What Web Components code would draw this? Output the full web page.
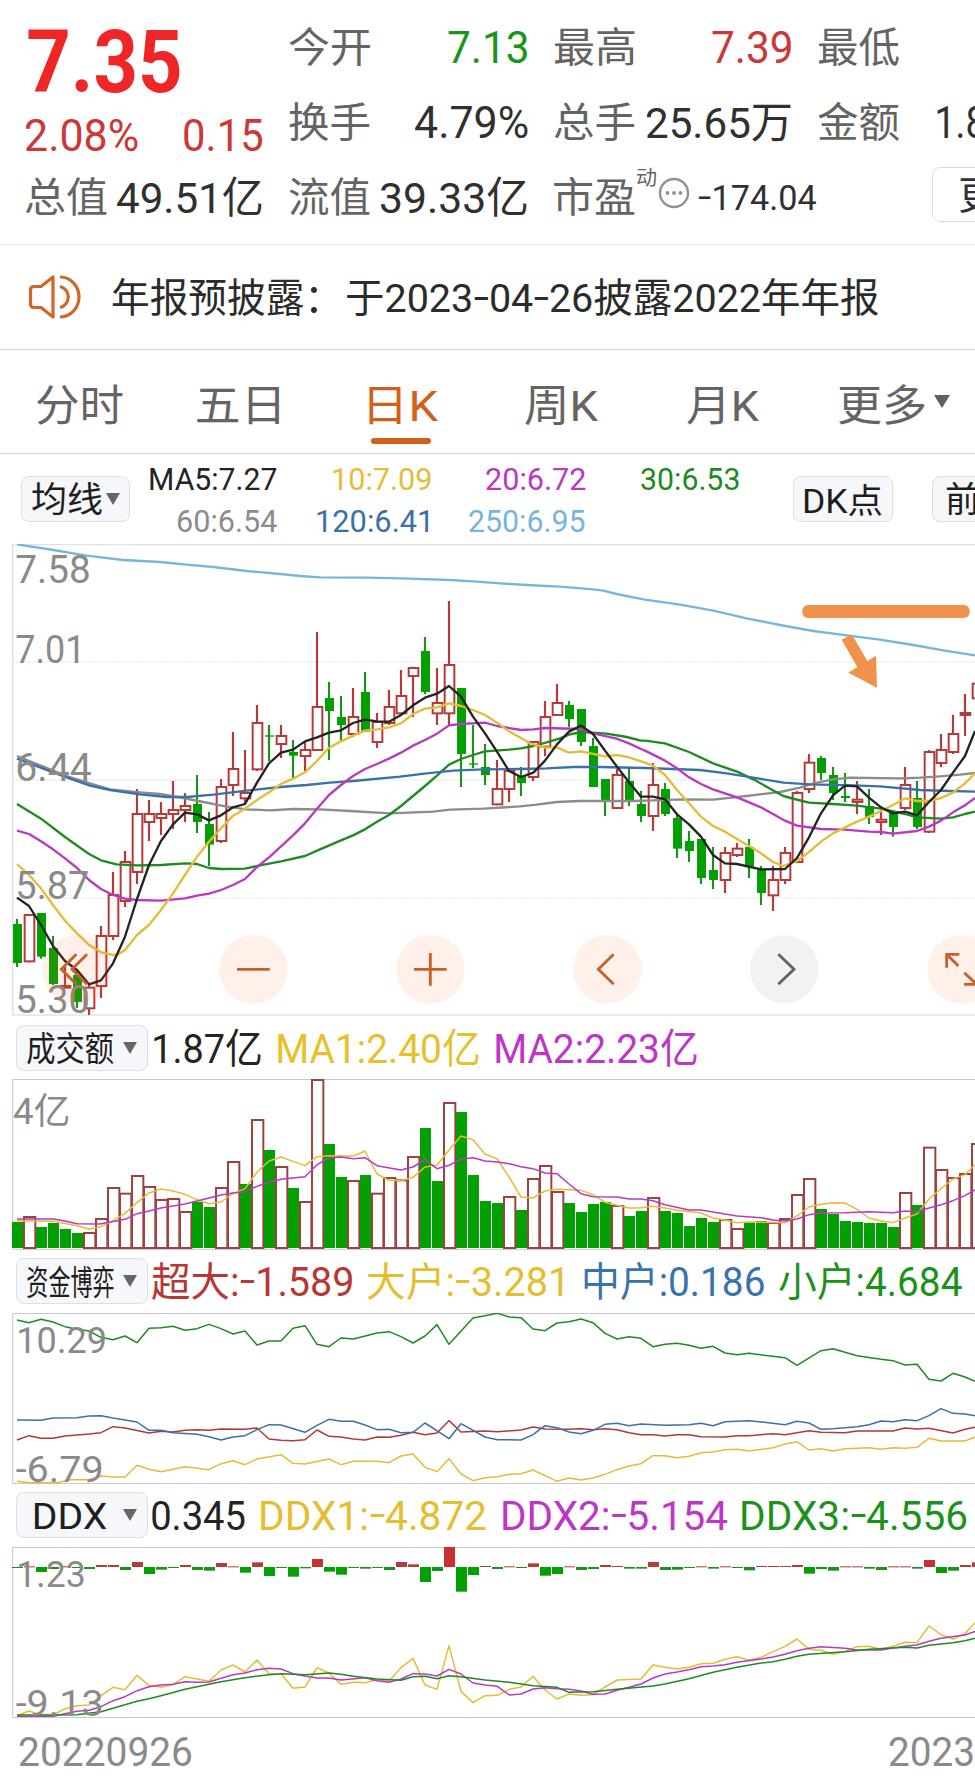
<!DOCTYPE html>
<html lang="zh-CN">
<head>
<meta charset="utf-8">
<title>日K</title>
<style>
  html, body { margin: 0; background: #fff; overflow: hidden; }
  body { width: 975px; height: 1778px; font-family: Roboto, "Noto Sans CJK SC", sans-serif; color: #2b2b2b; }
</style>
</head>
<body>
<stock-page></stock-page>

<script>
const RED = '#b53a38';
const GREEN = '#02a002';
const COLORS = {
  black: '#242424', yellow: '#e3bc38', magenta: '#b93ac0', green: '#1f8a22',
  gray: '#8c8c8c', blue: '#3c70a8', sky: '#78b5dd', red: '#b03a38'
};
const FONT = 'Roboto, "Noto Sans CJK SC", sans-serif';
const measure = document.createElement('canvas').getContext('2d');

// Text squeezed or stretched to an exact visible width
class FitText extends HTMLElement {
  constructor() {
    super();
    this.attachShadow({ mode: 'open' });
  }

  connectedCallback() {
    const w = Number(this.getAttribute('w'));
    const size = Number(this.getAttribute('size') || 40);
    const gap = this.getAttribute('gap') || 0;
    const weight = this.getAttribute('weight') || 400;
    const color = this.getAttribute('color');
    const text = this.textContent;
    // a minus sign is drawn wider than the font's hyphen
    const dashes = text.split('-').length - 1;
    measure.font = `${weight} ${size}px ${FONT}`;
    const m = measure.measureText(text);
    const k = w / (m.actualBoundingBoxLeft + m.actualBoundingBoxRight + dashes * size * 0.12);
    this.shadowRoot.innerHTML = `
      <style>
      :host {
        display: block;
        flex: none;
        width: ${w}px;
        margin-left: ${gap}px;
        font: ${weight} ${size}px/1.2 ${FONT};
        white-space: nowrap;
        ${color ? `color: ${COLORS[color] || color};` : ''}
      }
      span {
        display: inline-block;
        transform-origin: 0 50%;
        transform: translate(${m.actualBoundingBoxLeft * k}px, 1.5px) scaleX(${k});
        vertical-align: top;
      }
      b { display: inline-block; font-weight: inherit; margin: 0 .06em; transform: translateY(-.03em) scaleX(1.4); }
      </style><span>${text.replace(/-/g, '<b>-</b>')}</span>`;
  }
}
customElements.define('fit-text', FitText);

class QuoteHeader extends HTMLElement {
  constructor() {
    super();
    this.attachShadow({ mode: 'open' });
  }

  connectedCallback() {
    this.shadowRoot.innerHTML = `
      <style>
      :host { display: flex; height: 244px; border-bottom: 1px solid #e9e9e9; color: #303030; overflow: hidden; }
      .left { width: 262px; flex: none; padding-top: 10px; }
      .right { flex: 1; padding-top: 9px; }
      .row { display: flex; align-items: center; height: 75px; }
      .price { height: 100px; }
      .change { height: 48px; }
      .cap { height: 77px; }
      .label { color: #646464; }
      .sup { align-self: flex-start; margin-top: 5px; color: #646464; }
      .dots { flex: none; margin-left: 2px; margin-top: -7px; }
      .more {
        flex: none; box-sizing: border-box; width: 110px; height: 55px; margin: -5px 0 0 116px;
        display: flex; align-items: center; border: 1.5px solid #dedede; border-radius: 8px;
      }
      </style>
      <div class="left">
        <div class="row price"><fit-text gap="28" w="152" size="87" weight="700" color="#ee2626">7.35</fit-text></div>
        <div class="row change">
          <fit-text gap="26" w="112" size="44" color="#cb3838">2.08%</fit-text>
          <fit-text gap="46" w="78" size="44" color="#cb3838">0.15</fit-text>
        </div>
        <div class="row cap">
          <fit-text class="label" gap="25" w="82" size="41">总值</fit-text>
          <fit-text gap="10" w="145" size="43">49.51亿</fit-text>
        </div>
      </div>
      <div class="right">
        <div class="row">
          <fit-text class="label" gap="27" w="81" size="41">今开</fit-text>
          <fit-text gap="78" w="79" size="44" color="#199619">7.13</fit-text>
          <fit-text class="label" gap="27" w="81" size="41">最高</fit-text>
          <fit-text gap="77" w="79" size="44" color="#cb3838">7.39</fit-text>
          <fit-text class="label" gap="27" w="81" size="41">最低</fit-text>
        </div>
        <div class="row">
          <fit-text class="label" gap="27" w="81" size="41">换手</fit-text>
          <fit-text gap="45" w="113" size="44">4.79%</fit-text>
          <fit-text class="label" gap="26" w="81" size="41">总手</fit-text>
          <fit-text gap="11" w="145" size="43">25.65万</fit-text>
          <fit-text class="label" gap="27" w="81" size="41">金额</fit-text>
          <fit-text gap="38" w="48" size="44">1.8</fit-text>
        </div>
        <div class="row">
          <fit-text class="label" gap="27" w="81" size="41">流值</fit-text>
          <fit-text gap="11" w="146" size="43">39.33亿</fit-text>
          <fit-text class="label" gap="27" w="81" size="41">市盈</fit-text>
          <fit-text class="sup" gap="2" w="19" size="20">动</fit-text>
          <svg class="dots" width="32" height="32" viewBox="0 0 32 32">
            <circle cx="16" cy="16" r="14" fill="none" stroke="#929292" stroke-width="2.4"/>
            <circle cx="9.500" cy="16" r="1.900" fill="#929292"/><circle cx="16" cy="16" r="1.900" fill="#929292"/><circle cx="22.500" cy="16" r="1.900" fill="#929292"/>
          </svg>
          <fit-text gap="8" w="118" size="35">-174.04</fit-text>
          <div class="more"><fit-text gap="26" w="40" size="39">更</fit-text></div>
        </div>
      </div>`;
  }
}
customElements.define('quote-header', QuoteHeader);

class NoticeBar extends HTMLElement {
  constructor() {
    super();
    this.attachShadow({ mode: 'open' });
  }

  connectedCallback() {
    this.shadowRoot.innerHTML = `
      <style>
      :host { display: flex; align-items: center; height: 104px; border-bottom: 1px solid #d2d2d2; }
      svg { flex: none; margin-left: 28px; }
      </style>
      <svg width="54" height="46" viewBox="0 0 54 46" fill="none" stroke="#d2662a" stroke-width="3.2">
        <path d="M25 3V43L13 33.500H6Q2.500 33.500 2.500 30V16Q2.500 12.500 6 12.500H13Z" stroke-linejoin="round"/>
        <path d="M32 12.500A10.800 10.800 0 0 1 32 33.500M32 3A19 20 0 0 1 32 43"/>
      </svg>
      <fit-text gap="30" w="205" size="39.500">${this.getAttribute('subject')}</fit-text>
      <fit-text gap="30" w="532" size="39.500">${this.getAttribute('text')}</fit-text>`;
  }
}
customElements.define('notice-bar', NoticeBar);

class PeriodTabs extends HTMLElement {
  constructor() {
    super();
    this.attachShadow({ mode: 'open' });
  }

  connectedCallback() {
    this.shadowRoot.innerHTML = `
      <style>
      :host { display: flex; height: 103px; border-bottom: 1px solid #d2d2d2; color: #646464; }
      .tab { padding-top: 29px; }
      .tab fit-text { line-height: 50px; }
      .active { color: #d2601a; }
      .active::after { content: ""; display: block; width: 60px; height: 6px; margin: 9px 0 0 2px; border-radius: 3px; background: #d2601a; }
      .arrow { margin: 45px 0 0 9px; width: 0; height: 0; border: 8px solid transparent; border-top: 13px solid #5f5f5f; border-bottom: 0; }
      </style>
      <div class="tab"><fit-text gap="36" w="87" size="43">分时</fit-text></div>
      <div class="tab"><fit-text gap="74" w="82" size="43">五日</fit-text></div>
      <div class="tab" style="width:90px"></div>
      <div class="tab active"><fit-text w="69" size="43">日K</fit-text></div>
      <div class="tab"><fit-text gap="87" w="73" size="43">周K</fit-text></div>
      <div class="tab"><fit-text gap="89" w="72" size="43">月K</fit-text></div>
      <div class="tab"><fit-text gap="80" w="86" size="43">更多</fit-text></div>
      <div class="arrow"></div>`;
  }
}
customElements.define('period-tabs', PeriodTabs);

class PillButton extends HTMLElement {
  constructor() {
    super();
    this.attachShadow({ mode: 'open' });
  }

  connectedCallback() {
    const arrow = this.hasAttribute('arrow');
    this.shadowRoot.innerHTML = `
      <style>
      :host {
        display: flex; align-items: center; flex: none; box-sizing: border-box; height: 46px;
        width: ${this.getAttribute('w')}px; border: 1px solid #dddfe4; border-radius: 8px;
        background: #f6f7fa; color: #1e1e1e;
      }
      i { margin-left: ${this.getAttribute('arrow')}px; border: 7.5px solid transparent; border-top: 12px solid #666; border-bottom: 0; }
      </style>
      <slot></slot>${arrow ? '<i></i>' : ''}`;
  }
}
customElements.define('pill-button', PillButton);

class MaLegend extends HTMLElement {
  constructor() {
    super();
    this.attachShadow({ mode: 'open' });
  }

  connectedCallback() {
    this.shadowRoot.innerHTML = `
      <style>
      :host { display: flex; align-items: center; height: 90px; overflow: hidden; }
      .values { width: 664px; flex: none; }
      .row { display: flex; align-items: center; height: 42px; }
      </style>
      <pill-button w="109" arrow="4" style="margin-left:21px"><fit-text gap="10" w="70" size="35">均线</fit-text></pill-button>
      <div class="values">
        <div class="row">
          <fit-text gap="20" w="127" size="31" color="black">MA5:7.27</fit-text>
          <fit-text gap="56" w="98" size="31" color="yellow">10:7.09</fit-text>
          <fit-text gap="55" w="100" size="31" color="magenta">20:6.72</fit-text>
          <fit-text gap="55" w="98" size="31" color="green">30:6.53</fit-text>
        </div>
        <div class="row">
          <fit-text gap="48" w="99" size="31" color="gray">60:6.54</fit-text>
          <fit-text gap="40" w="112" size="31" color="blue">120:6.41</fit-text>
          <fit-text gap="40" w="116" size="31" color="sky">250:6.95</fit-text>
        </div>
      </div>
      <pill-button w="100" style="margin-left:-1px"><fit-text gap="10" w="78" size="34">DK点</fit-text></pill-button>
      <pill-button w="100" style="margin-left:39px"><fit-text gap="13" w="33" size="35">前</fit-text></pill-button>`;
  }
}
customElements.define('ma-legend', MaLegend);

// Charts are drawn in thirds of a pixel; one bar takes 36 units and the first is centred on 51.
const STEP = 36;
const FIRST = 51;

function line(color, width, ...parts) {
  const pts = parts.map(([dx, s]) => s.trim().split(/\s+/).map(p => {
    const [x, y] = p.split(',').map(Number);
    return `${x + dx},${y}`;
  }).join(' ')).join(' ');
  return `<polyline points="${pts}" fill="none" stroke="${COLORS[color]}" stroke-width="${width}" stroke-linejoin="round"/>`;
}

function label(text, x, y, w, size = 118) {
  return `<text x="${x - 5}" y="${y}" font-size="${size}" textLength="${w + 10}" lengthAdjust="spacingAndGlyphs" fill="#8a8a8a">${text}</text>`;
}

function frame(top, bottom, color, width = 3) {
  return `<path d="M2940 ${top}H38V${bottom}H2940" fill="none" stroke="${color}" stroke-width="${width}"/>`;
}

// kind, high, body top, body bottom, low
const CANDLES = `g1137,1152,1269,1281 r1122,1125,1264,1267 g1119,1119,1250,1256 g1188,1224,1332,1335 r1280,1338,1343,1345
g1290,1305,1386,1404 r1335,1343,1405,1425 r1158,1188,1338,1374 r996,1065,1188,1200 r933,966,1083,1101
r747,822,996,1032 r780,822,846,903 r786,822,834,885 r723,810,822,867 r759,798,810,846
g705,792,846,879 g816,852,914,978 r717,741,903,909 r576,687,735,768 r630,759,775,790
r495,549,688,693 g555,586,590,663 r555,588,612,654 g600,636,647,714 r603,630,648,693
r276,501,630,633 g426,474,513,660 g468,531,555,603 r444,531,582,591 g396,456,575,576
r519,546,606,624 r450,501,549,555 r390,468,520,525 r380,384,408,531 g291,333,456,462
r384,489,520,555 r183,375,520,555 g444,444,642,741 g555,670,674,684 g612,681,705,735
r660,747,793,796 r687,693,747,786 g681,708,729,768 r603,606,711,723 r483,531,620,648
r432,489,525,528 g483,495,537,561 g507,507,606,618 g594,618,741,741 g717,717,780,828
r687,705,804,807 g684,723,783,798 g753,792,828,846 r669,735,828,873 g729,747,822,828
g820,834,926,954 g873,903,933,966 g897,897,1014,1032 g921,990,1020,1047 r921,939,1020,1059
r909,926,945,951 g897,921,980,1014 g978,990,1059,1095 r978,1020,1066,1113 r921,939,1020,1032
r753,759,966,969 r642,668,747,759 g648,654,699,720 g681,705,759,780 g699,768,774,786
r723,779,786,822 g747,798,831,852 r810,839,846,885 g810,816,861,890 r681,735,804,810
g723,774,861,867 r630,636,875,879 r582,630,669,681 r525,582,636,642 r462,519,525,588 r426,431,475,480`.split(/\s+/);

class KChart extends HTMLElement {
  constructor() {
    super();
    this.attachShadow({ mode: 'open' });
  }

  candles() {
    return CANDLES.map((c, i) => {
      const x = FIRST + STEP * i;
      const [high, top, bottom, low] = c.slice(1).split(',').map(Number);
      if (c[0] === 'g') {
        return `<path d="M${x} ${high}V${low}" stroke="#1f8f1f" stroke-width="6.500"/>
          <rect x="${x - 12}" y="${top}" width="27" height="${bottom - top}" fill="${GREEN}"/>`;
      }
      return `<path d="M${x} ${high}V${top}M${x} ${bottom}V${low}" stroke="${RED}" stroke-width="6.500"/>
        <rect x="${x - 13}" y="${top}" width="29" height="${bottom - top}" fill="none" stroke="${RED}" stroke-width="6"/>`;
    }).join('');
  }

  averages() {
    return line('sky', 7, [0, `51,13 160,30 260,47 370,60 480,66 560,74 640,81 740,93 840,102 900,108 960,112 1100,113 1230,116
        1350,120 1420,124 1500,130 1580,135 1680,140 1780,148 1810,152 1850,162 1900,172 1935,179 2040,194 2140,212 2240,235
        2340,255 2440,273 2540,286 2640,299 2740,315 2830,331 2925,346`]) +
      line('gray', 7, [0, `51,648 130,680 200,708 280,733 330,748 420,757 480,762 550,774 610,786 680,800 740,808 810,811 880,807
        960,808 1050,813 1170,820 1300,815 1350,809 1450,806 1560,799 1610,794 1670,786 1740,783 1900,783 1960,781 2050,778
        2140,779 2240,768 2340,756 2400,743 2440,730 2500,718 2550,713 2700,715 2760,713 2820,709 2880,704 2925,699`]) +
      line('green', 7, [0, `51,792 123,836 195,891 267,942 303,961 350,973 411,976 483,975 555,970 591,972 627,984 663,987 735,986
        780,976 843,964 915,948`],
        [960, `0,928 63,901 99,886 135,868 171,845 207,825 243,798 279,768 315,738 351,707 387,674 423,657 459,645 495,634 567,629
        603,625 640,618 680,607 720,595 747,584 783,576 860,581 920,591 963,602`],
        [1935, `0,602 60,610 132,636 204,670 276,695 325,718 370,743 415,768 460,780 492,788 564,792 636,797 708,806 780,822
        816,832 888,836 924,832 960,822 990,815`]) +
      line('blue', 7, [0, `51,656 130,686 200,712 270,737 330,750 420,763 500,771 560,771 640,764 740,752 840,741 920,735 990,728
        1060,723 1200,710 1280,700 1360,692 1450,688 1560,687 1640,685 1720,681 1800,681 1935,684 2100,690 2180,700 2260,713
        2350,728 2430,733 2560,736 2640,739 2760,750 2850,753 2925,755`]) +
      line('magenta', 7, [0, `51,872 87,882 123,904 159,928 195,955 231,984 267,1020 303,1047 339,1065 375,1076 411,1080 483,1082
        555,1075 591,1067 627,1061 663,1050 699,1035 735,1017 771,981 807,952 843,919 879,886 915,850 951,806`],
        [960, `27,765 63,735 99,708 135,687 171,672 207,656 243,638 279,617 315,600 351,581 387,556 423,552 495,548 531,558
        603,570 640,568 675,564 783,567 819,580 890,596 927,610 963,627`],
        [1935, `0,632 60,662 96,685 132,712 168,732 204,748 276,772 312,787 348,802 384,822 420,842 456,857 528,867 600,869
        672,875 708,876 744,881 816,873 852,860 888,842 924,817 960,796 990,774`]) +
      line('yellow', 7, [0, `51,972 87,1005 123,1045 159,1095 195,1142 231,1180 267,1215 303,1237 339,1245 355,1243 375,1230
        411,1185 447,1155 483,1110 519,1060 555,1005 591,950 627,905 663,865 699,827 735,806 771,780 807,757 843,732 879,716
        915,697 951,663`],
        [960, `27,623 63,604 99,587 135,572 171,568 207,562 243,550 279,522 315,506 351,502 387,490 423,498 459,510 495,525
        531,548 567,574 603,594 630,610 675,623 711,622 747,638 783,634 855,649 891,645 927,652 963,664`],
        [1935, `0,668 24,677 60,705 96,750 132,790 168,830 204,858 240,875 276,897 312,918 348,940 384,966 415,978 456,963
        492,936 528,905 564,880 600,862 636,845 672,830 708,813 744,795 780,775 816,783 852,783 888,774 924,758 960,730 990,700`]) +
      line('black', 7, [0, `51,1073 87,1098 123,1155 159,1218 195,1263 231,1290 267,1333 303,1321 339,1270 375,1190 411,1077
        447,975 483,903 519,853 555,818 591,823 627,841 663,826 699,802 735,792 771,728 807,670 843,638 879,629 915,604 951,592`],
        [960, `27,578 63,571 99,549 135,539 171,544 207,545 243,525 279,496 315,473 351,461 387,438 423,470 459,530 495,580
        531,635 567,693 603,711 640,698 675,662 711,613 747,575 783,557 819,582 855,632 891,680 927,727 963,770`],
        [1935, `24,770 60,778 96,823 132,853 168,890 204,945 240,970 276,972 348,988 420,987 456,954 492,892 528,820 564,766
        600,737 636,739 672,773 708,802 744,820 780,815 816,826 852,786 888,750 924,698 960,648 990,573`]);
  }

  buttons() {
    const icons = [
      '<path d="M0-45L-45 0L0 45M32-45L-13 0L32 45"/>',
      '<path d="M-49 0H49"/>',
      '<path d="M-49 0H49M0-49V49"/>',
      '<path d="M19-45L-27 0L19 45"/>',
      '<path d="M-18-45L29 0L-18 45" stroke="#636363"/>',
      '<path d="M-7-45H-45V-5M-43-43L-10-10M8 10L43 43M7 45H45V5"/>'
    ];
    return icons.map((icon, i) => `
      <g transform="translate(${229 + 531 * i + (i === 5 ? 1 : 0)} 1288)" fill="none" stroke="#c9602a" stroke-width="8.500">
        <circle r="103" stroke="none" fill="${i === 4 ? 'rgba(0,0,0,.05)' : 'rgba(255,110,40,.1)'}"/>${icon}
      </g>`).join('');
  }

  connectedCallback() {
    this.shadowRoot.innerHTML = `
      <style>
      :host { display: block; height: 476px; }
      svg { display: block; font-family: ${FONT}; }
      </style>
      <svg width="975" height="476" viewBox="0 12 2925 1428">
        ${[366, 720, 1074].map(y => `<path d="M38 ${y}H2925" stroke="#ebebeb" stroke-width="5" stroke-dasharray="6 3"/>`).join('')}
        ${frame(13, 1425, '#e2e2e2', 5)}
        ${this.candles()}
        ${this.averages()}
        ${label('7.58', 51, 129, 216)}
        ${label('7.01', 51, 369, 200)}
        ${label('6.44', 51, 723, 219)}
        ${label('5.87', 51, 1077, 212)}
        ${label('5.30', 51, 1419, 214)}
        ${this.buttons()}
        <rect x="2407" y="195" width="502" height="39" rx="17" fill="#f1924c"/>
        <path d="M2525 299L2550 286Q2556 284 2560 291L2602 363L2628 347L2631 443L2545 398L2572 381Z" fill="#f1924c"/>
      </svg>`;
  }
}
customElements.define('k-chart', KChart);

const VOLUME = `g606 r591 g621 g609 g627 g639 r639 r597 r504 r521 r468 r501 r540 r537 r576 g546 g561 r504 r426 g492 r300
g390 r441 g504 r546 r180 g372 g471 r483 g465 r521 r474 r481 r411 g324 g483 r249 g276 g465 g543 g549 r531 g570 r477 r438
r516 g549 g576 g552 g546 r558 g588 g573 r534 g573 g579 g618 g594 g606 r600 r627 g609 g603 r609 r597 r525 r477 g567 g582
g603 g606 g609 g609 g621 r519 g555 r383 r450 r474 r462 r372`.split(/\s+/);

// bar heights above (+) or below (-) the zero line
const DDX = [-2, 2, -15, -6, 2, -3, -6, 6, 6, -9, 15, -21, -8, -2, 6, -9, -11, 12, 2, -17, 14, -27, -3, -29, -4, 24, -14,
  -23, -3, -5, -3, -9, 15, 8, -45, -12, 60, -74, -24, 3, -6, 2, -3, 11, -26, -21, 2, -9, -6, 6, 3, -5, -5, 15, -9, -8, -3,
  2, -5, 2, -3, -10, 3, 3, 3, 6, -20, -6, -11, 2, 2, -5, -9, 2, 2, -5, 21, -18, -11, 6, 14];

const PLOTS = {
  volume: () => frame(178.500, 688, '#c8c8c8') +
    VOLUME.map((v, i) => {
      const x = 36 + STEP * i;
      const y = Number(v.slice(1));
      return v[0] === 'g'
        ? `<rect x="${x}" y="${y}" width="33" height="${684 - y}" fill="${GREEN}"/>`
        : `<rect x="${x}" y="${y}" width="34" height="${684 - y}" fill="#fff" stroke="#9c433f" stroke-width="6"/>`;
    }).join('') +
    line('yellow', 4.5, [0, `51,602 160,604 231,617 267,627 303,620 339,602 375,580 411,548 447,519 483,507 519,513 555,523
      591,539 627,551 663,546 699,520 735,506 771,456 807,423 843,411 879,424 915,437 951,410 987,407 1060,408 1095,393
      1131,462 1167,481 1203,482 1239,472 1275,441 1311,436 1347,390 1383,348 1419,359 1455,402`],
      [1455, `37,417 73,473 108,531 144,534 180,513 216,508 288,511 324,524 360,547 396,556 432,564 468,563 504,559 540,564
      576,571 648,579 684,594 720,600 756,608 792,606 900,608 936,588 972,561 1008,553 1044,548 1080,549 1116,568 1152,594
      1188,603 1224,608 1260,594 1296,582 1332,537 1368,506 1404,477 1440,464 1470,434`]) +
    line('magenta', 4.5, [0, `51,597 160,597 195,603 231,611 300,612 375,598 411,581 447,573 483,564 555,552 591,543 627,534
      663,525 699,519 735,515 771,499 807,487 843,478 915,470 951,434 987,414 1023,411 1060,416 1095,413 1131,437 1203,450
      1239,441 1275,418 1311,446 1347,436 1383,417 1419,413 1455,423`],
      [1455, `37,426 73,431 108,440 144,446 180,459 216,461 252,492 288,521 324,530 396,531 432,537 468,537 504,542 540,554
      612,570 648,570 756,588 828,593 864,600 900,603 936,597 972,584 1008,579 1080,578 1152,575 1224,578 1260,573 1296,575
      1332,564 1368,554 1404,542 1440,527 1470,510`]) +
    label('4亿', 44, 312, 162, 108),

  funds: () => frame(190.500, 700.500, '#c8c8c8') +
    line('yellow', 4.5, [0, `51,694 90,698 170,698 210,689 267,689 303,678 339,681 375,681 411,646 447,658 483,665 555,650
      627,659 663,641 699,632 735,644 771,627 843,614 879,640 915,642 987,627 1023,644 1060,634 1131,634 1167,638 1203,618
      1239,612 1275,652 1311,665 1347,626 1383,672 1419,692 1455,683`],
      [1455, `37,680 73,673 108,671 144,660 180,677 216,694 252,684 288,690 324,684 360,673 396,659 432,648 468,641 504,617
      540,617 576,623 612,619 648,608 684,606 720,599 756,598 792,603 864,593 900,582 936,575 972,600 1008,596 1044,603
      1080,596 1152,593 1188,598 1224,593 1260,595 1296,592 1332,565 1368,573 1440,573 1470,561`]) +
    line('red', 4.5, [0, `51,570 87,557 123,565 159,565 195,558 267,552 303,548 339,530 375,534 447,549 483,544 519,546 555,541
      591,539 627,541 663,537 735,538 771,534 807,567 843,571 879,572 915,569 951,540 987,559 1023,561 1060,567 1095,570
      1131,561 1167,562 1203,556 1239,547 1275,554 1311,549 1347,512 1383,546 1455,543`],
      [1455, `37,545 108,540 144,531 180,537 252,538 288,536 324,539 360,536 396,539 432,548 468,554 504,554 540,558 576,554
      612,554 648,560 720,561 756,557 792,557 864,551 900,554 972,542 1008,547 1080,548 1116,543 1224,543 1260,534 1296,537
      1332,535 1404,549 1440,538 1470,532`]) +
    line('blue', 4.5, [0, `51,510 123,511 159,504 231,503 267,498 303,497 339,504 411,516 447,541 483,541 519,548 591,553
      627,560 663,570 699,561 735,557 771,539 807,524 843,525 915,547 951,526 987,508 1023,514 1060,514 1095,525 1131,539
      1167,538 1203,548 1239,547 1275,519 1347,566 1383,521 1455,561`],
      [1455, `37,569 108,570 144,554 180,527 216,533 252,546 288,551 324,541 360,523 396,520 432,527 468,522 540,526 612,524
      648,520 684,527 720,515 792,512 900,524 936,514 972,519 1008,538 1044,536 1116,530 1152,524 1188,513 1224,515 1260,509
      1296,512 1332,497 1368,476 1404,490 1440,492 1470,497`]) +
    line('green', 4.5, [0, `51,210 87,218 123,208 159,216 195,230 231,238 267,243 303,262 339,269 375,258 411,278 447,235
      483,233 519,229 555,241 591,236 627,223 663,236 699,252 735,243 771,285 807,273 843,273 879,235 915,227 951,283 987,290
      1023,264 1060,267 1131,249 1167,245 1203,260 1239,279 1275,258 1311,224 1347,283 1419,204 1455,197`],
      [1455, `37,190 73,201 108,203 144,237 180,242 216,219 252,215 288,207 324,218 360,250 396,267 432,260 468,265 504,290
      540,283 576,280 612,286 648,295 684,289 720,309 756,314 792,310 900,323 936,346 1008,302 1044,296 1116,317 1188,328
      1224,332 1260,345 1296,343 1332,388 1368,393 1404,370 1440,381 1470,394`]) +
    label('10.29', 54, 309, 262, 112) + label('-6.79', 52, 695, 254, 112),

  ddx: () => frame(172.500, 682.500, '#c8c8c8') +
    DDX.map((v, i) => `<rect x="${36 + STEP * i}" y="${v > 0 ? 231 - v : 231}" width="33" height="${Math.max(3, Math.abs(v))}"
      fill="${v > 0 ? (v > 20 ? '#cb2f2f' : RED) : (v < -12 ? GREEN : '#169416')}"/>`).join('') +
    line('yellow', 4.5, [0, `51,677 87,663 123,675 160,675 195,656 231,647 267,645 303,617 339,592 375,599 411,556 447,586
      483,592 519,584 555,560 591,567 627,574 663,540 699,525 735,546 771,510 807,551 843,551 879,595 915,591 951,533 987,549
      1023,583 1060,577 1095,578 1131,569 1167,573 1203,533 1239,505 1275,585 1311,598 1347,467 1383,604 1419,638 1455,617`],
      [1455, `37,616 73,598 108,591 144,559 180,600 216,627 252,612 288,616 324,614 360,591 396,570 468,567 504,525 540,532
      576,537 612,532 648,521 684,520 720,508 756,500 792,511 828,502 864,485 900,469 936,447 972,478 1008,481 1044,493
      1080,484 1116,470 1152,469 1188,478 1224,469 1260,457 1296,458 1332,408 1368,434 1404,447 1440,430 1470,398`]) +
    line('magenta', 4.5, [0, `51,679 160,679 195,671 231,664 267,661 303,650 339,632 375,620 411,602 447,590 483,585 519,583
      555,575 591,577 627,576 663,565 699,554 735,549 771,539 807,535 843,537 879,551 915,558 951,564 987,564 1023,570
      1095,563 1131,572 1167,577 1203,567 1239,551 1275,552 1311,558 1347,538 1383,552 1419,579 1455,585`],
      [1455, `37,589 73,615 108,612 144,597 180,593 216,596 252,598 288,603 324,613 360,612 396,601 432,592 468,582 504,564
      540,552 576,546 612,539 648,530 684,528 720,524 756,517 828,507 864,501 900,493 936,482 972,475 1008,470 1080,475
      1116,480 1188,480 1224,474 1260,469 1296,465 1332,454 1368,445 1440,435 1470,424`]) +
    line('green', 4.5, [0, `51,675 230,674 267,670 303,665 339,655 411,634 447,626 483,617 555,598 627,583 663,575 735,563
      807,554 843,551 915,554 987,549 1023,553 1060,559 1131,567 1203,571 1239,560 1275,559 1311,566 1347,557 1383,560
      1455,570`],
      [1455, `73,577 144,587 216,592 252,607 324,605 396,598 504,588 540,582 612,566 684,547 756,532 828,519 864,515 900,508
      936,499 972,493 1080,485 1152,478 1224,474 1260,472 1296,474 1332,466 1404,458 1440,452 1470,445`]) +
    label('1.23', 54, 291, 198, 112) + label('-9.13', 52, 677, 254, 112)
};

class IndicatorPanel extends HTMLElement {
  constructor() {
    super();
    this.attachShadow({ mode: 'open' });
  }

  connectedCallback() {
    const [top, height] = this.getAttribute('view').split(' ').map(Number);
    const [head, rest] = this.getAttribute('head').split(' ');
    this.shadowRoot.innerHTML = `
      <style>
      :host { display: block; }
      header { display: flex; align-items: center; height: ${head}px; padding-bottom: ${rest}px; }
      svg { display: block; font-family: ${FONT}; }
      </style>
      <header><slot></slot></header>
      <svg width="975" height="${height}" viewBox="0 ${top} 2925 ${height * 3}">${PLOTS[this.getAttribute('plot')]()}</svg>`;
  }
}
customElements.define('indicator-panel', IndicatorPanel);

class StockPage extends HTMLElement {
  constructor() {
    super();
    this.attachShadow({ mode: 'open' });
  }

  connectedCallback() {
    this.shadowRoot.innerHTML = `
      <style>
      :host { display: block; width: 975px; height: 1778px; overflow: hidden; }
      pill-button { margin-left: 16px; }
      footer { display: flex; align-items: center; height: 59px; padding-top: 2px; color: #8a8a8a; }
      </style>
      <quote-header></quote-header>
      <notice-bar subject="年报预披露：" text="于2023-04-26披露2022年年报"></notice-bar>
      <period-tabs></period-tabs>
      <ma-legend></ma-legend>
      <k-chart></k-chart>
      <indicator-panel plot="volume" head="55 4" view="177 171">
        <pill-button w="132" arrow="9"><fit-text gap="10" w="87" size="34">成交额</fit-text></pill-button>
        <fit-text gap="6" w="107" size="41" color="black">1.87亿</fit-text>
        <fit-text gap="17" w="201" size="41" color="#e8c02c">MA1:2.40亿</fit-text>
        <fit-text gap="17" w="201" size="41" color="#bd36c6">MA2:2.23亿</fit-text>
      </indicator-panel>
      <indicator-panel plot="funds" head="62 1" view="189 172">
        <pill-button w="132" arrow="9"><fit-text gap="10" w="87" size="34">资金博弈</fit-text></pill-button>
        <fit-text gap="4" w="200" size="40" color="#b83634">超大:-1.589</fit-text>
        <fit-text gap="15" w="196" size="40" color="#e5be30">大户:-3.281</fit-text>
        <fit-text gap="21" w="180" size="40" color="#3a72ae">中户:0.186</fit-text>
        <fit-text gap="15" w="183" size="40" color="#1c921c">小户:4.684</fit-text>
      </indicator-panel>
      <indicator-panel plot="ddx" head="60 2" view="171 172">
        <pill-button w="132" arrow="16"><fit-text gap="18" w="72" size="37">DDX</fit-text></pill-button>
        <fit-text gap="4" w="93" size="41" color="black">0.345</fit-text>
        <fit-text gap="16" w="225" size="41" color="#e5be30">DDX1:-4.872</fit-text>
        <fit-text gap="17" w="225" size="41" color="#bd36c6">DDX2:-5.154</fit-text>
        <fit-text gap="14" w="225" size="41" color="#1c921c">DDX3:-4.556</fit-text>
      </indicator-panel>
      <footer>
        <fit-text gap="19" w="173" size="41">20220926</fit-text>
        <fit-text gap="697" w="84" size="41">2023</fit-text>
      </footer>`;
  }
}
customElements.define('stock-page', StockPage);
</script>
</body>
</html>
